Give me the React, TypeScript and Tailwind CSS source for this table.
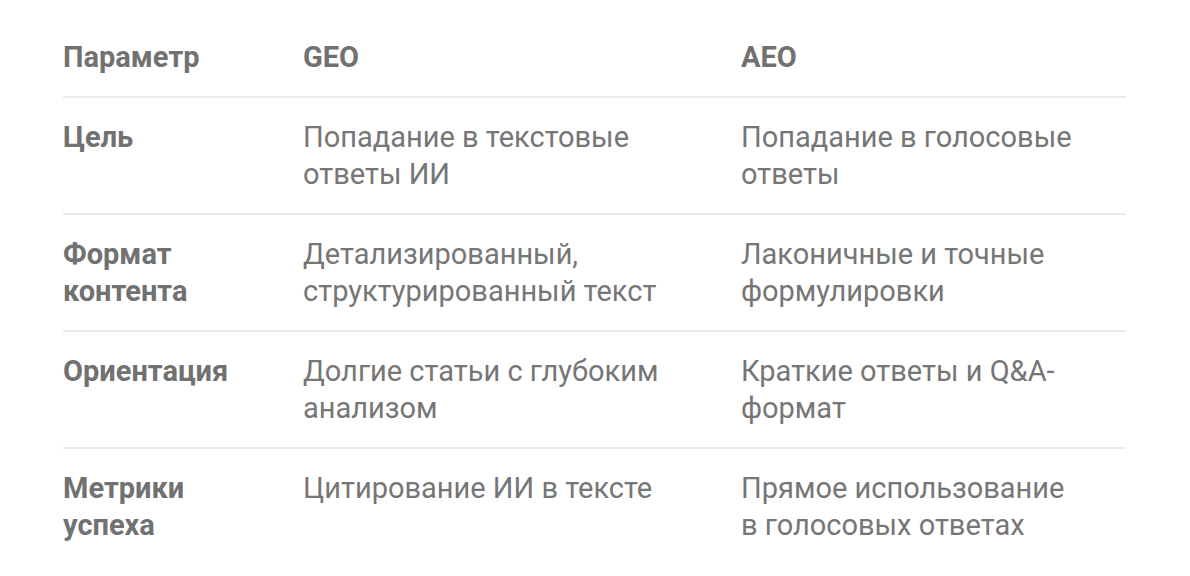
const rows = [
  { param: ['Цель'], geo: 'Попадание в текстовые ответы ИИ', aeo: 'Попадание в голосовые ответы' },
  { param: ['Формат', 'контента'], geo: 'Детализированный, структурированный текст', aeo: 'Лаконичные и точные формулировки' },
  { param: ['Ориентация'], geo: 'Долгие статьи с глубоким анализом', aeo: 'Краткие ответы и Q&A-формат' },
  { param: ['Метрики', 'успеха'], geo: 'Цитирование ИИ в тексте', aeo: 'Прямое использование в голосовых ответах' },
];

export default function App() {
  return (
    <div className="min-h-screen bg-white pl-[63px] pt-[39px] text-[29px] leading-[37px] text-[#767676]" style={{ fontFamily: 'Roboto, "Noto Sans", sans-serif' }}>
      <div className="w-[1063px]">
        <div className="grid grid-cols-[240px_438px_385px] border-b-2 border-[#ebebeb] pb-[20px] font-bold text-[#717171]">
          <div className="pr-[45px]">Параметр</div>
          <div className="pr-[45px]">GEO</div>
          <div className="pr-[45px]">AEO</div>
        </div>
        {rows.map((r, i) => (
          <div
            key={i}
            className={`grid grid-cols-[240px_438px_385px] pt-[21px] pb-[20px] ${i < rows.length - 1 ? 'border-b-2 border-[#ebebeb]' : ''}`}
          >
            <div className="pr-[45px] font-bold text-[#717171]">
              {r.param.map((p) => (
                <div key={p}>{p}</div>
              ))}
            </div>
            <div className="pr-[45px]">{r.geo}</div>
            <div className="pr-[45px]">{r.aeo}</div>
          </div>
        ))}
      </div>
    </div>
  );
}
